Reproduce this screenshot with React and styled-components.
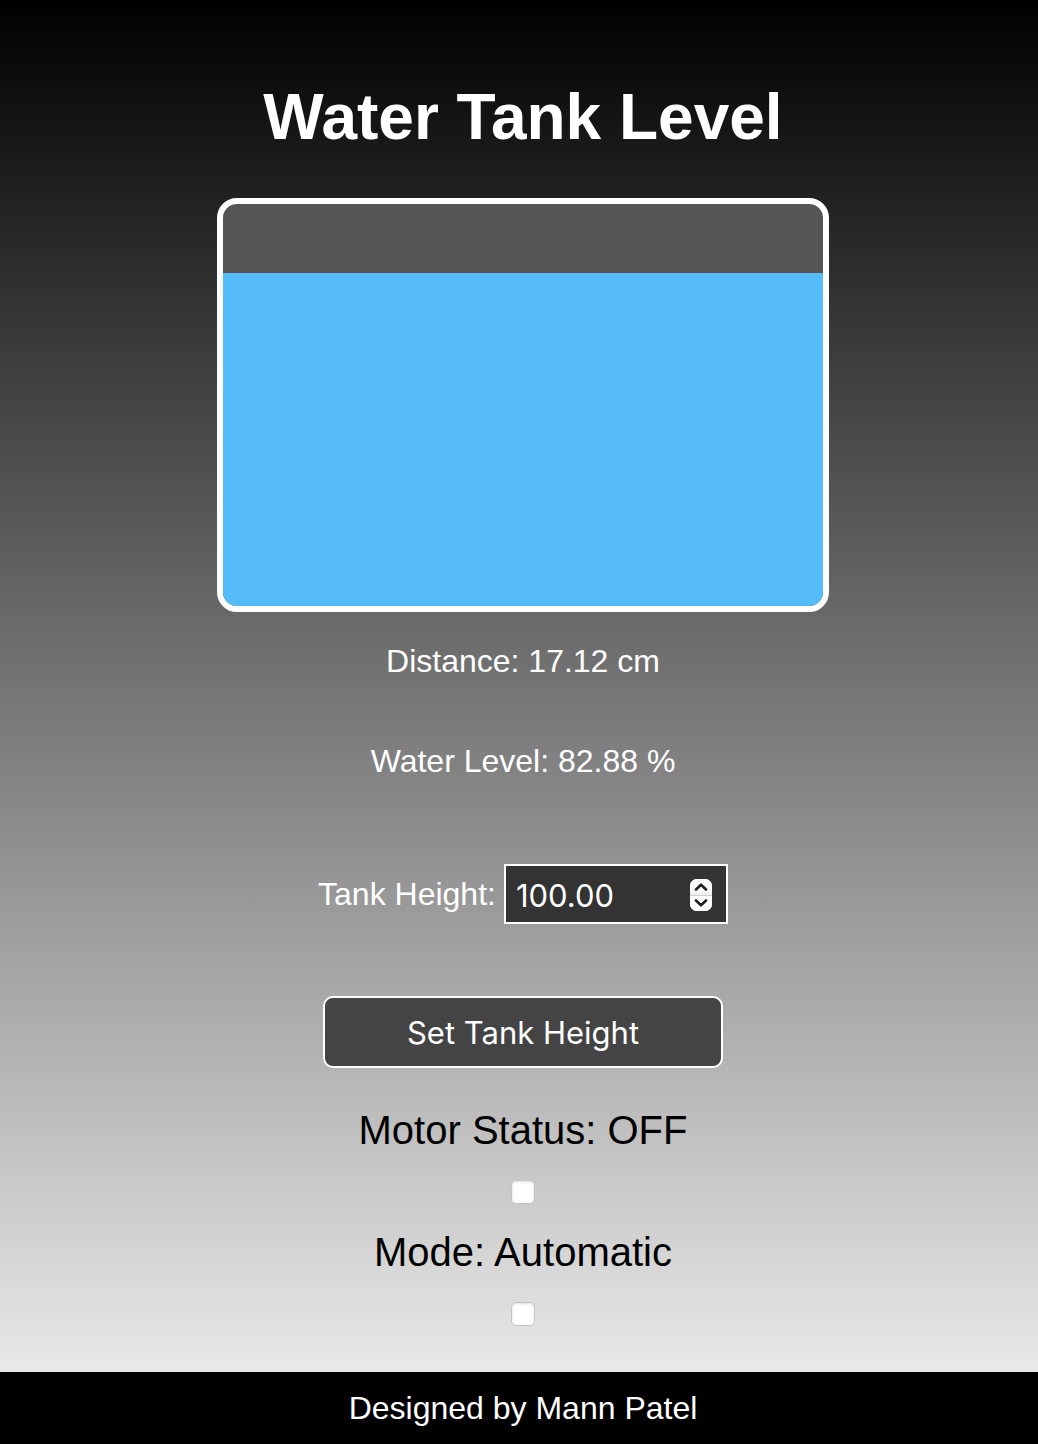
import React, { useState } from "react";
import styled, { createGlobalStyle } from "styled-components";

const GlobalStyle = createGlobalStyle`
  *, *::before, *::after { box-sizing: border-box; }
  body {
    margin: 0;
    font-family: "Liberation Sans", Arial, sans-serif;
    color: #fff;
  }
`;

const Page = styled.div`
  min-height: 100vh;
  display: flex;
  flex-direction: column;
  background: linear-gradient(#000, #f5f5f5);
`;

const Main = styled.main`
  flex: 1;
  display: flex;
  flex-direction: column;
  align-items: center;
  padding: 80px 16px 44px 24px;
`;

const Title = styled.h1`
  margin: 0 0 44px;
  font-size: 64px;
  line-height: 74px;
  text-align: center;
`;

const Tank = styled.div`
  width: 100%;
  max-width: 612px;
  height: 414px;
  display: flex;
  flex-direction: column;
  justify-content: flex-end;
  overflow: hidden;
  border: 6px solid #fff;
  border-radius: 20px;
  background: #555;
`;

const Water = styled.div`
  background: #55bbf9;
`;

const Readings = styled.div`
  display: flex;
  flex-direction: column;
  align-items: center;
  gap: 64px;
  padding: 31px 0 85px;
`;

const Reading = styled.p`
  margin: 0;
  font-size: 32px;
  line-height: 36px;
`;

const HeightForm = styled.form`
  display: flex;
  flex-direction: column;
  align-items: center;
  gap: 72px;
  margin-bottom: 39px;
`;

const Field = styled.div`
  display: flex;
  align-items: center;
  gap: 8px;
  font-size: 32px;
`;

const NumberBox = styled.div`
  display: flex;
  align-items: center;
  width: 224px;
  height: 60px;
  padding: 2px 14px 0 10px;
  border: 2px solid #fff;
  background: #333;
`;

const NumberInput = styled.input`
  flex: 1;
  min-width: 0;
  padding: 0;
  border: 0;
  outline: 0;
  appearance: textfield;
  background: transparent;
  color: #fff;
  font: 31px Inter, sans-serif;
  &::-webkit-inner-spin-button { appearance: none; margin: 0; }
`;

const Stepper = styled.div`
  display: flex;
  flex-direction: column;
  width: 22px;
  height: 32px;
  overflow: hidden;
  border-radius: 7px;
  background: #fff;
`;

const StepButton = styled.button`
  flex: 1;
  display: grid;
  place-items: center;
  padding: 0;
  border: 0;
  background: linear-gradient(#fff 60%, #ececec);
  color: #222;
  & + & {
    border-top: 1px solid #d0d0d0;
    background: #fff;
  }
`;

const SubmitButton = styled.button`
  width: 400px;
  max-width: 100%;
  height: 72px;
  border: 2px solid #fff;
  border-radius: 10px;
  background: #444;
  color: #fff;
  font: 31px Inter, sans-serif;
`;

const Toggle = styled.div`
  display: flex;
  flex-direction: column;
  align-items: center;
  gap: 27px;
  margin-bottom: 25px;
  font-size: 40px;
  line-height: 46px;
  color: #000;
  &:last-child { margin-bottom: 0; }
`;

const Checkbox = styled.input`
  appearance: none;
  width: 24px;
  height: 24px;
  margin: 0;
  border: 1px solid #c4c4c4;
  border-radius: 5px;
  background: #fff;
  box-shadow: inset 0 1px 3px rgba(0, 0, 0, 0.14);
  &:checked { background: #55bbf9; }
`;

const Footer = styled.footer`
  padding: 18px 16px 18px 24px;
  background: #000;
  font-size: 32px;
  line-height: 36px;
  text-align: center;
`;

function Chevron({ down }) {
  return (
    <svg width="14" height="8" viewBox="0 0 14 8" fill="none" stroke="currentColor" strokeWidth="2.6" strokeLinecap="round" strokeLinejoin="round" aria-hidden="true">
      <path d={down ? "M2 1.500 7 6.300l5-4.800" : "M2 6.500 7 1.700l5 4.800"} />
    </svg>
  );
}

export default function App() {
  const [height, setHeight] = useState("100.00");
  const [motor, setMotor] = useState(false);
  const [manual, setManual] = useState(false);
  const level = 82.88;
  const step = (n) => setHeight((h) => (Number(h) + n).toFixed(2));

  return (
    <Page>
      <GlobalStyle />
      <Main>
        <Title>Water Tank Level</Title>
        <Tank>
          <Water style={{ height: `${level}%` }} />
        </Tank>
        <Readings>
          <Reading>Distance: 17.12 cm</Reading>
          <Reading>Water Level: {level} %</Reading>
        </Readings>
        <HeightForm onSubmit={(e) => e.preventDefault()}>
          <Field>
            <label htmlFor="height">Tank Height:</label>
            <NumberBox>
              <NumberInput id="height" type="number" step="0.01" value={height} onChange={(e) => setHeight(e.target.value)} />
              <Stepper>
                <StepButton type="button" aria-label="Increase" onClick={() => step(1)}><Chevron /></StepButton>
                <StepButton type="button" aria-label="Decrease" onClick={() => step(-1)}><Chevron down /></StepButton>
              </Stepper>
            </NumberBox>
          </Field>
          <SubmitButton>Set Tank Height</SubmitButton>
        </HeightForm>
        <Toggle>
          <label htmlFor="motor">Motor Status: {motor ? "ON" : "OFF"}</label>
          <Checkbox id="motor" type="checkbox" checked={motor} onChange={(e) => setMotor(e.target.checked)} />
        </Toggle>
        <Toggle>
          <label htmlFor="mode">Mode: {manual ? "Manual" : "Automatic"}</label>
          <Checkbox id="mode" type="checkbox" checked={manual} onChange={(e) => setManual(e.target.checked)} />
        </Toggle>
      </Main>
      <Footer>Designed by Mann Patel</Footer>
    </Page>
  );
}
